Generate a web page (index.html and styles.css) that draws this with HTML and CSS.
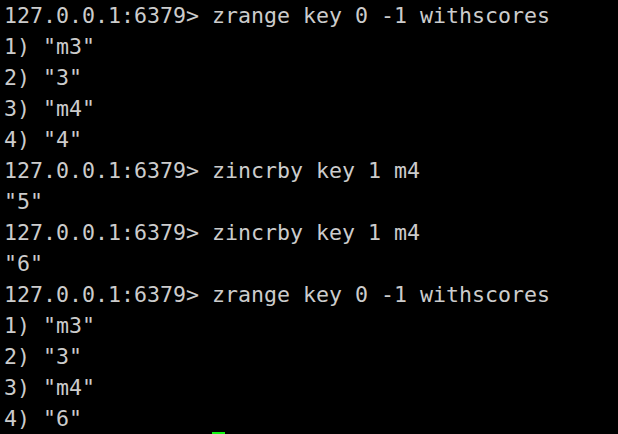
FILE: index.html
```html
<!DOCTYPE html>
<html>
<head>
<meta charset="utf-8">
<link rel="stylesheet" href="styles.css">
</head>
<body>
<div class="term">
<pre class="out">127.0.0.1:6379&gt; zrange key 0 -1 withscores
1) "m3"
2) "3"
3) "m4"
4) "4"
127.0.0.1:6379&gt; zincrby key 1 m4
"5"
127.0.0.1:6379&gt; zincrby key 1 m4
"6"
127.0.0.1:6379&gt; zrange key 0 -1 withscores
1) "m3"
2) "3"
3) "m4"
4) "6"</pre>
<div class="cursor"></div>
</div>
</body>
</html>
```
FILE: styles.css
```css
html, body {
  margin: 0;
  padding: 0;
  background: #000;
  width: 618px;
  height: 434px;
  overflow: hidden;
}
.term {
  position: relative;
  width: 618px;
  height: 434px;
  background: #000;
}
.out {
  margin: 0;
  padding: 0 0 0 4px;
  font-family: "DejaVu Sans Mono", monospace;
  font-size: 21.6px;
  line-height: 31px;
  color: #cccccc;
  white-space: pre;
}
.cursor {
  position: absolute;
  left: 212px;
  top: 432px;
  width: 13px;
  height: 2px;
  background: #13f313;
}
```
